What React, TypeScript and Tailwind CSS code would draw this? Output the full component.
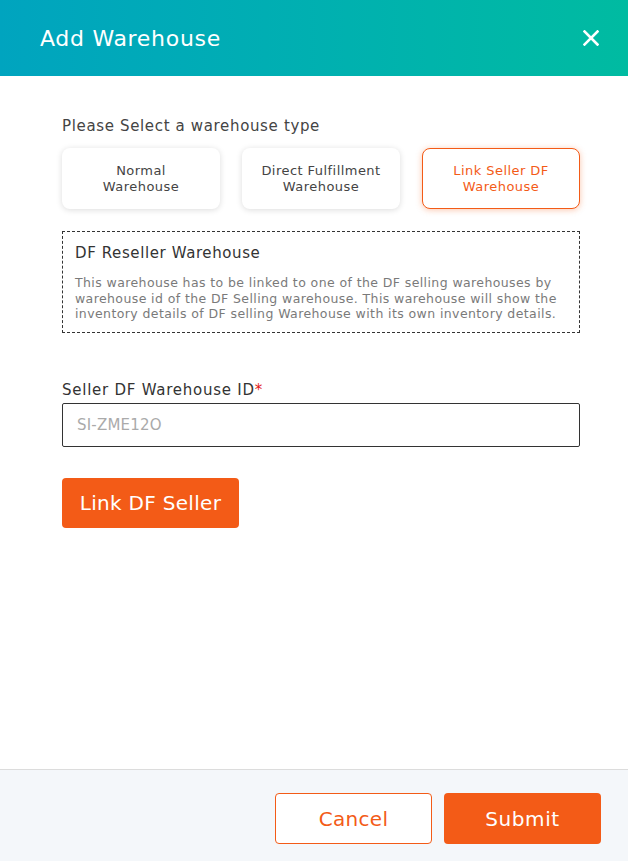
import React from "react";

export default function App() {
  const font = { fontFamily: '"DejaVu Sans", "Noto Sans", sans-serif' };
  return (
    <div className="w-[628px] h-[861px] flex flex-col bg-white" style={font}>
      <div className="h-[76px] shrink-0 flex items-center justify-between pl-[40px] pr-[29px] bg-gradient-to-r from-[#00a4bf] to-[#00bba1]">
        <div className="text-white text-[22px] font-medium tracking-[0.7px]">Add Warehouse</div>
        <svg width="16" height="16" viewBox="0 0 16 16" className="text-white">
          <path d="M1.5 1.5 L14.5 14.5 M14.5 1.5 L1.5 14.5" stroke="currentColor" strokeWidth="2.6" strokeLinecap="square" />
        </svg>
      </div>
      <div className="flex-1 pl-[62px] pr-[48px]">
        <div className="pt-[40px] text-[15px] tracking-[0.65px] text-[#444] leading-[20px]">Please Select a warehouse type</div>
        <div className="mt-[12px] grid grid-cols-3 gap-[22px]">
          <div className="h-[61px] rounded-[8px] bg-white shadow-[0_1px_6px_rgba(0,0,0,0.14)] flex items-center justify-center text-center text-[13px] tracking-[0.45px] leading-[16px] text-[#444]">
            Normal<br />Warehouse
          </div>
          <div className="h-[61px] rounded-[8px] bg-white shadow-[0_1px_6px_rgba(0,0,0,0.14)] flex items-center justify-center text-center text-[13px] tracking-[0.45px] leading-[16px] text-[#444]">
            Direct Fulfillment<br />Warehouse
          </div>
          <div className="h-[61px] rounded-[8px] bg-white border border-[#f35b17] shadow-[0_1px_6px_rgba(243,91,23,0.35)] flex items-center justify-center text-center text-[13px] tracking-[0.45px] leading-[16px] text-[#f35b17]">
            Link Seller DF<br />Warehouse
          </div>
        </div>
        <div className="mt-[22px] h-[102px] border border-dashed border-[#333] px-[12px] pt-[11px]">
          <div className="text-[15px] tracking-[0.6px] text-[#333] leading-[20px]">DF Reseller Warehouse</div>
          <div className="mt-[12px] text-[12.5px] tracking-[0.4px] text-[#7a7a7a] leading-[15.5px]">
            This warehouse has to be linked to one of the DF selling warehouses by warehouse id of the DF Selling warehouse. This warehouse will show the inventory details of DF selling Warehouse with its own inventory details.
          </div>
        </div>
        <div className="mt-[47px] text-[15px] tracking-[0.75px] text-[#333] leading-[20px]">
          Seller DF Warehouse ID<span className="text-[#e21a1a]">*</span>
        </div>
        <div className="mt-[3px] h-[44px] border border-[#333] rounded-[2px] flex items-center px-[14px] text-[15px] tracking-[0.2px] text-[#aaa]">
          SI-ZME12O
        </div>
        <button className="mt-[31px] h-[50px] w-[177px] rounded-[4px] bg-[#f35b17] text-white text-[20px] tracking-[0.3px] flex items-center justify-center">
          Link DF Seller
        </button>
      </div>
      <div className="h-[92px] shrink-0 border-t border-[#dcdcdc] bg-[#f4f7fa] flex items-start justify-end gap-[12px] pr-[27px] pt-[23px]">
        <button className="h-[51px] w-[157px] rounded-[4px] border border-[#f35b17] bg-white text-[#f35b17] text-[20px] tracking-[0.3px]">Cancel</button>
        <button className="h-[51px] w-[157px] rounded-[4px] bg-[#f35b17] text-white text-[20px] tracking-[0.6px] font-medium">Submit</button>
      </div>
    </div>
  );
}
